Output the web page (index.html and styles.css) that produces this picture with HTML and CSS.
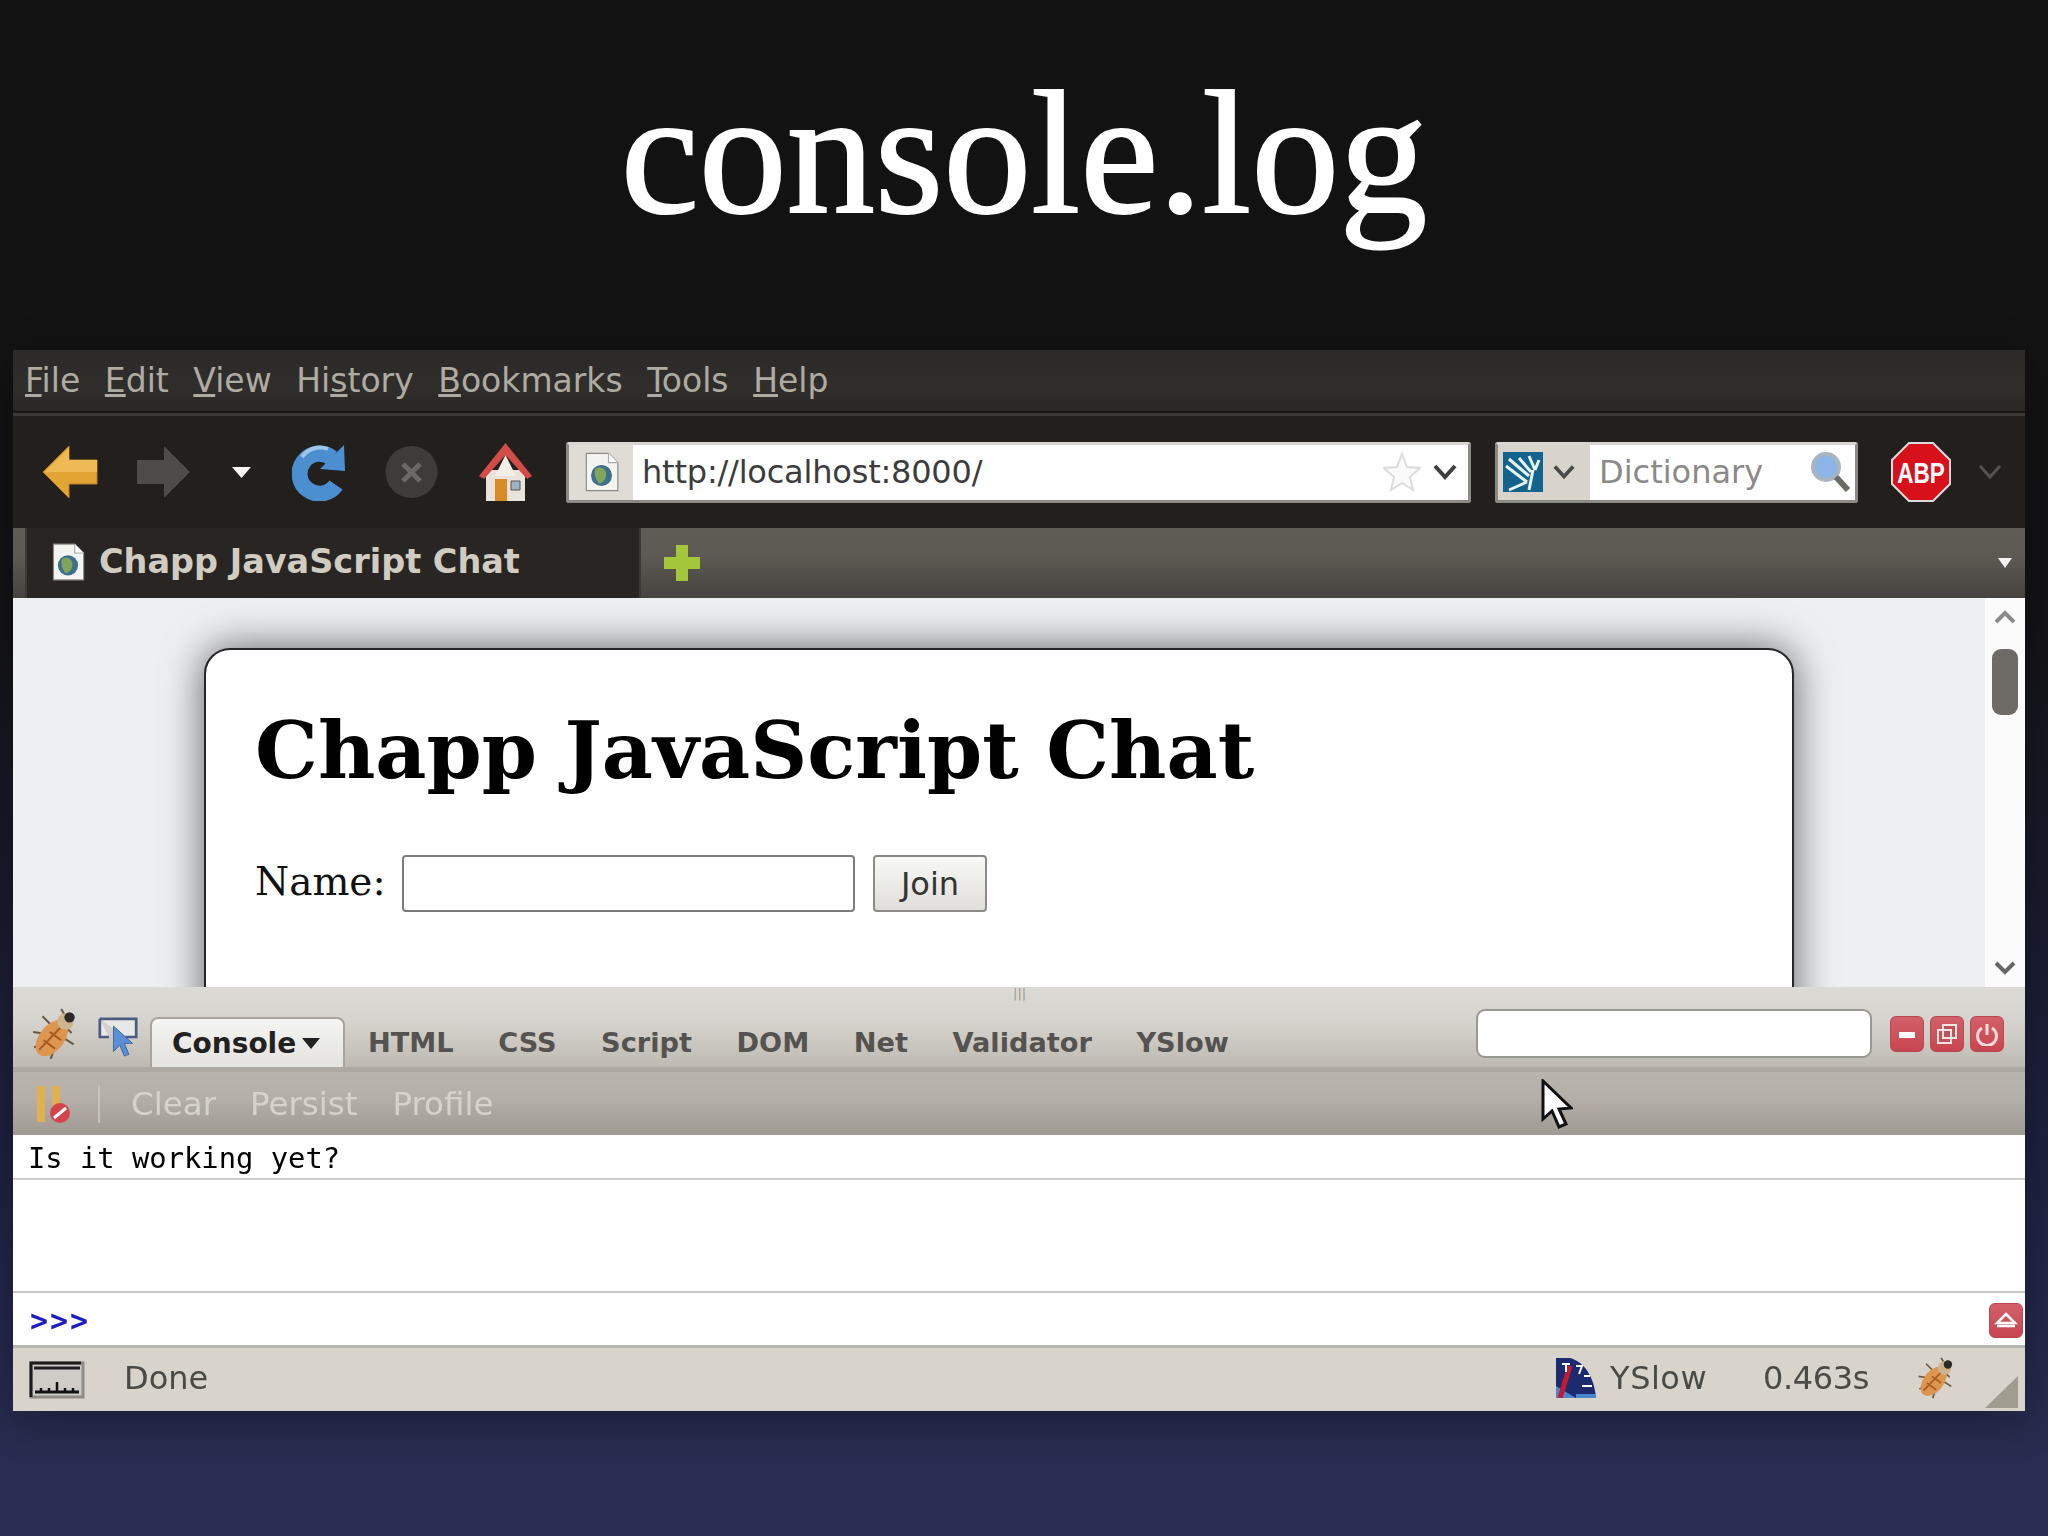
FILE: index.html
```html
<!DOCTYPE html>
<html lang="en">
<head>
    <meta charset="UTF-8">
    <title>console.log</title>
    <link rel="stylesheet" href="styles.css">
</head>
<body>
    <svg class="defs" width="0" height="0">
        <symbol id="bug" viewBox="0 0 50 50">
            <g stroke="#6b5a45" stroke-width="2" fill="none">
                <path d="M22 18 12 8M16 25 3 23M15 33 4 38M24 36 20 49M31 28 42 35M30 14 40 24M34 8 30 1"/>
            </g>
            <ellipse cx="21" cy="29" rx="12" ry="20" transform="rotate(38 21 29)" fill="#dc9650"/>
            <path d="M9 40 31 17M13 31 24 39M19 23 30 31" stroke="#a85a20" stroke-width="2" fill="none"/>
            <circle cx="34" cy="13" r="8" fill="#cdb48e"/>
            <circle cx="38" cy="9" r="5" fill="#2c2a28"/>
        </symbol>
        <symbol id="page" viewBox="0 0 30 34">
            <path d="M2 1h19l8 8v24H2z" fill="#f4f4f0" stroke="#8a8a86"/>
            <path d="M21 1v8h8" fill="#fff" stroke="#aaa"/>
            <circle cx="15" cy="20" r="9" fill="#3d6f8e"/>
            <path d="M10 14c4-2 9 0 9 5s-4 8-6 8c-3-3-5-9-3-13z" fill="#7fa65a"/>
        </symbol>
    </svg>

    <h1 class="slide-title">console.log</h1>

    <div class="window">
        <div class="menubar">
            <span><u>F</u>ile</span>
            <span><u>E</u>dit</span>
            <span><u>V</u>iew</span>
            <span>Hi<u>s</u>tory</span>
            <span><u>B</u>ookmarks</span>
            <span><u>T</u>ools</span>
            <span><u>H</u>elp</span>
        </div>

        <div class="navbar">
            <svg class="nav-back" width="56" height="54" viewBox="0 0 56 54"><path d="M27 1 1 27l26 26V39h28V15H27z" fill="#e2a534" stroke="#b88222"/><path d="M27 3 3 27h52V15H27z" fill="#eeba55"/></svg>
            <svg class="nav-forward" width="55" height="54" viewBox="0 0 55 54"><path d="M28 1l26 26-26 26V39H1V15h27z" fill="#4e4c49"/></svg>
            <svg class="nav-caret" width="19" height="12" viewBox="0 0 19 12"><path d="M0 1h19l-9.500 11z" fill="#f4f4f4"/></svg>
            <svg class="nav-reload" width="54" height="58" viewBox="0 0 54 58"><path d="M44 42a20 20 0 1 1-4-27" fill="none" stroke="#4c8fd0" stroke-width="16"/><path d="M28 26 53 28 52 2z" fill="#4c8fd0"/><path d="M10 14a22 22 0 0 1 26-8" fill="none" stroke="#9cc6ea" stroke-width="4"/></svg>
            <svg class="nav-stop" width="55" height="54" viewBox="0 0 55 54"><circle cx="27.500" cy="27" r="26" fill="#3e3c3a"/><path d="M19 19l17 17M36 19 19 36" stroke="#6c6864" stroke-width="5"/></svg>
            <svg class="nav-home" width="55" height="60" viewBox="0 0 55 60"><path d="M8 28h39v31H8z" fill="#e8e4dc"/><path d="M27.500 1 1 34l5 3L27.500 13 49 37l5-3z" fill="#d24c48"/><path d="M17 34 27.500 13 38 34z" fill="#f3efe6"/><path d="M17 37h12v22H17z" fill="#d98a24"/><path d="M33 39h9v9h-9z" fill="#9fb2c0" stroke="#555"/></svg>

            <div class="urlbar">
                <span class="url-site"><svg width="35" height="40"><use href="#page"/></svg></span>
                <span class="url-text">http://localhost:8000/</span>
                <svg class="url-star" width="38" height="40" viewBox="0 0 38 40"><path d="M19 2l5 13 13 1-10 9 3 13-11-7-11 7 3-13-10-9 13-1z" fill="#fafafa" stroke="#dcdcdc" stroke-width="2"/></svg>
                <svg class="chev" width="24" height="16" viewBox="0 0 24 16"><path d="M2 2l10 11L22 2" fill="none" stroke="#3e3e3e" stroke-width="4"/></svg>
            </div>

            <div class="searchbar">
                <span class="search-engine">
                    <svg width="40" height="40" viewBox="0 0 40 40"><path d="M0 0h40v40H0z" fill="#14638c"/><path d="M3 14 24 30M6 7 26 24M16 6l12 14M26 4l6 14M36 8 32 18M30 18 26 38M24 30 6 38" stroke="#e6f4f4" stroke-width="3" fill="none"/></svg>
                    <svg class="chev" width="22" height="16" viewBox="0 0 24 16"><path d="M2 2l10 11L22 2" fill="none" stroke="#4a4a4a" stroke-width="4"/></svg>
                </span>
                <span class="search-text">Dictionary</span>
                <svg class="search-lens" width="40" height="42" viewBox="0 0 40 42"><circle cx="16" cy="16" r="13" fill="#8db4e6" stroke="#a9b4c0" stroke-width="4"/><path d="M26 26l12 13" stroke="#6a6d64" stroke-width="6"/></svg>
            </div>

            <svg class="abp" width="60" height="60" viewBox="0 0 60 60"><path d="M18 1h24l17 17v24L42 59H18L1 42V18z" fill="#d8101c" stroke="#dcdcdc" stroke-width="2"/><text text-anchor="middle" class="abp-text" transform="translate(30 41) scale(0.75 1)">ABP</text></svg>
            <svg class="abp-chev" width="26" height="16" viewBox="0 0 24 16"><path d="M2 2l10 11L22 2" fill="none" stroke="#55524e" stroke-width="3"/></svg>
        </div>

        <div class="tabstrip">
            <div class="tab">
                <svg width="34" height="38"><use href="#page"/></svg>
                <span>Chapp JavaScript Chat</span>
            </div>
            <svg class="tab-new" width="38" height="38" viewBox="0 0 38 38"><path d="M13 1h12v12h12v12H25v12H13V25H1V13h12z" fill="#a4c639"/></svg>
            <svg class="tab-list" width="16" height="12" viewBox="0 0 16 12"><path d="M1 1h14l-7 10z" fill="#f4f4f4"/></svg>
        </div>

        <div class="viewport">
            <div class="page-area">
                <div class="card">
                    <h2>Chapp JavaScript Chat</h2>
                    <div class="join-form">
                        <label>Name:</label>
                        <span class="name-input"></span>
                        <span class="join-btn">Join</span>
                    </div>
                </div>
            </div>
            <div class="scrollbar">
                <svg width="24" height="14" viewBox="0 0 24 14"><path d="M3 12 12 3l9 9" fill="none" stroke="#8a8a88" stroke-width="4"/></svg>
                <div class="scroll-thumb"></div>
                <svg class="scroll-down" width="24" height="14" viewBox="0 0 24 14"><path d="M3 2l9 9 9-9" fill="none" stroke="#666" stroke-width="4"/></svg>
            </div>
        </div>

        <div class="fb-toolbar">
            <span class="fb-grip">|||</span>
            <svg class="fb-bug" width="56" height="52"><use href="#bug"/></svg>
            <svg class="fb-inspect" width="42" height="40" viewBox="0 0 44 44"><path d="M2 2h40v20H30M2 2v20h10" fill="#e8e8e6" stroke="#4c5c80" stroke-width="3"/><path d="M17 10v28l7-7 5 12 5-2-5-12h9z" fill="#5a8fd8" stroke="#3a5f9a"/></svg>
            <div class="fb-tab">Console<svg width="20" height="11" viewBox="0 0 20 11"><path d="M1 0h18l-9 11z" fill="#222"/></svg></div>
            <div class="fb-panels">
                <span>HTML</span>
                <span>CSS</span>
                <span>Script</span>
                <span>DOM</span>
                <span>Net</span>
                <span>Validator</span>
                <span>YSlow</span>
            </div>
            <div class="fb-search"></div>
            <div class="fb-buttons">
                <span class="red-btn"><svg width="20" height="20" viewBox="0 0 20 20"><path d="M2 8h16v6H2z" fill="#fff"/></svg></span>
                <span class="red-btn"><svg width="22" height="22" viewBox="0 0 22 22"><path d="M7 2h13v13H7zM2 7h13v13H2z" fill="#c0505a" stroke="#f5e6e0" stroke-width="2"/></svg></span>
                <span class="red-btn"><svg width="24" height="24" viewBox="0 0 24 24"><path d="M7 6a9.500 9.500 0 1 0 10 0M12 2v11" fill="none" stroke="#f3dcd8" stroke-width="3"/></svg></span>
            </div>
        </div>

        <div class="fb-subbar">
            <svg class="pause" width="38" height="40" viewBox="0 0 38 40"><path d="M2 2h8v36H2zM17 2h8v24h-8z" fill="#e2b050"/><circle cx="25" cy="29" r="10" fill="#d4444a"/><path d="M19 34 31 24" stroke="#fff" stroke-width="3"/></svg>
            <span class="fb-sep"></span>
            <span class="sub-clear">Clear</span>
            <span class="sub-persist">Persist</span>
            <span class="sub-profile">Profile</span>
        </div>

        <div class="log-row">Is it working yet?</div>
        <div class="log-empty"></div>
        <div class="cmd-line">
            <span class="prompt">&gt;&gt;&gt;</span>
            <span class="red-btn cmd-btn"><svg width="24" height="16" viewBox="0 0 24 16"><path d="M12 2 21 11H3zM3 14h18" fill="none" stroke="#fff" stroke-width="2.500"/></svg></span>
        </div>

        <div class="statusbar">
            <svg class="status-meter" width="56" height="38" viewBox="0 0 56 38"><path d="M2 2h52v34H2z" fill="#cfccc8" stroke="#8e8c86" stroke-width="3"/><path d="M2 36V2h50" fill="none" stroke="#1c1c1c" stroke-width="3"/><path d="M5 7h46" stroke="#1c1c1c" stroke-width="3"/><path d="M6 31h44" stroke="#111" stroke-width="3"/><path d="M12 31v-4M20 31v-4M28 31v-10M36 31v-4M44 31v-4" stroke="#111" stroke-width="2.500"/></svg>
            <span class="status-done">Done</span>
            <svg class="status-yslow" width="40" height="40" viewBox="0 0 40 40"><path d="M0 0h14c14 4 24 18 26 40H0z" fill="#1c2a70"/><path d="M20 36h20v4H20zM0 28l20 12H0z" fill="#4a86cc"/><path d="M14 8 4 40" stroke="#c8182c" stroke-width="5"/><path d="M6 6h8M10 6v8M20 8h6l-3 8M28 18h6M26 28h10" stroke="#fff" stroke-width="2" fill="none"/></svg>
            <span class="status-yslow-text">YSlow</span>
            <span class="status-time">0.463s</span>
            <svg class="status-bug" width="42" height="42"><use href="#bug"/></svg>
            <svg class="status-grip" width="33" height="32" viewBox="0 0 33 32"><path d="M33 0v32H0z" fill="#a09c90"/></svg>
        </div>

        <svg class="cursor" width="32" height="50" viewBox="0 0 32 50"><path d="M2 2v38l9-8 7 16 7-3-7-15 12-1z" fill="#fff" stroke="#111" stroke-width="3"/></svg>
    </div>
</body>
</html>
```

FILE: styles.css
```css
html, body {
    margin: 0;
    height: 1536px;
    overflow: hidden;
}
body {
    background: linear-gradient(#121212 0, #131315 600px, #1e2140 1150px, #292e52 1480px);
    font-family: "DejaVu Sans", sans-serif;
}
.defs {
    display: block;
    height: 0;
}
.slide-title {
    margin: 0;
    height: 350px;
    box-sizing: border-box;
    padding-top: 58px;
    text-align: center;
    font-family: "Liberation Serif", serif;
    font-weight: normal;
    font-size: 176px;
    line-height: 190px;
    color: #fff;
    -webkit-text-stroke: 2px #fff;
}
.window {
    position: relative;
    margin-left: 13px;
    width: 2012px;
    height: 1061px;
    display: flex;
    flex-direction: column;
    box-shadow: 0 10px 40px rgba(0, 0, 0, 0.3);
    filter: blur(0.7px);
}

/* browser chrome */
.menubar {
    height: 66px;
    box-sizing: border-box;
    display: flex;
    align-items: center;
    gap: 24.600px;
    padding: 0 0 2px 12px;
    background: linear-gradient(#2c2a28, #302e2b 60%, #292725);
    border-bottom: 3px solid #3b3936;
    box-shadow: inset 0 -2px 0 #1c1a18;
    font-size: 33px;
    color: #aeaba3;
}
.navbar {
    height: 112px;
    display: flex;
    align-items: center;
    background: #221f1d;
}
.navbar svg {
    flex: none;
}
.nav-back { margin-left: 29px; }
.nav-forward { margin-left: 38px; }
.nav-caret { margin-left: 41px; }
.nav-reload { margin-left: 41px; }
.nav-stop { margin-left: 38px; }
.nav-home { margin-left: 39px; }
.urlbar {
    margin-left: 33px;
    width: 905px;
    height: 61px;
    box-sizing: border-box;
    display: flex;
    align-items: center;
    background: #fff;
    border: 3px solid #8c8a86;
    border-top-color: #d8d6d2;
    border-radius: 3px;
    font-size: 32px;
    color: #3c3c3c;
}
.url-site {
    width: 64px;
    height: 100%;
    display: flex;
    align-items: center;
    justify-content: center;
    background: #dfdcd6;
    flex: none;
}
.url-text {
    margin-left: 9px;
    flex: 1;
    letter-spacing: -0.2px;
}
.url-star { margin-right: 12px; }
.chev { margin-right: 11px; }
.searchbar {
    margin-left: 24px;
    width: 363px;
    height: 61px;
    box-sizing: border-box;
    display: flex;
    align-items: center;
    background: #fff;
    border: 3px solid #8c8a86;
    border-top-color: #d8d6d2;
    border-radius: 3px;
    font-size: 32px;
    color: #8a8a88;
}
.search-engine {
    width: 92px;
    height: 100%;
    display: flex;
    align-items: center;
    gap: 10px;
    padding-left: 5px;
    box-sizing: border-box;
    background: #d8d4cc;
    flex: none;
}
.search-engine .chev { margin: 0; }
.search-text {
    margin-left: 9px;
    flex: 1;
}
.search-lens { margin-right: 5px; }
.abp { margin-left: 33px; }
.abp-text {
    font-family: "Liberation Sans", sans-serif;
    font-weight: bold;
    font-size: 30px;
    fill: #fff;
}
.abp-chev { margin-left: 26px; }
.tabstrip {
    height: 70px;
    display: flex;
    align-items: center;
    position: relative;
    background: linear-gradient(#5f5c56, #5d5a54 40%, #46423e);
}
.tab {
    margin-left: 12px;
    width: 616px;
    height: 100%;
    box-sizing: border-box;
    display: flex;
    align-items: center;
    gap: 14px;
    padding: 0 0 3px 24px;
    background: #282522;
    border-left: 2px solid #3c3a37;
    border-right: 2px solid #3c3a37;
    font-size: 33.500px;
    font-weight: bold;
    color: #d0ccc2;
}
.tab-new { margin-left: 22px; }
.tab-list { margin-left: auto; margin-right: 12px; }

/* page inside the browser */
.viewport {
    height: 389px;
    display: flex;
    overflow: hidden;
    background: #eeeff1;
}
.page-area {
    flex: 1;
    padding: 50px 0 0 191px;
}
.card {
    width: 1590px;
    height: 400px;
    box-sizing: border-box;
    padding: 56px 49px;
    background: #fff;
    border: 2px solid #26262a;
    border-radius: 26px;
    box-shadow: 0 0 42px rgba(0, 0, 0, 0.6);
}
.card h2 {
    margin: 0;
    font-family: "DejaVu Serif", serif;
    font-size: 79px;
    line-height: 90px;
    color: #000;
}
.join-form {
    margin-top: 59px;
    display: flex;
    align-items: center;
}
.join-form label {
    width: 147px;
    font-family: "DejaVu Serif", serif;
    font-size: 39px;
    color: #111;
    margin-top: -4px;
}
.name-input {
    width: 453px;
    height: 57px;
    box-sizing: border-box;
    background: #fff;
    border: 2px solid #7c7c7a;
    border-radius: 4px;
}
.join-btn {
    margin-left: 18px;
    width: 114px;
    height: 57px;
    box-sizing: border-box;
    display: flex;
    align-items: center;
    justify-content: center;
    background: linear-gradient(#f8f8f6, #dfdeda);
    border: 2px solid #8a8a86;
    border-radius: 4px;
    font-size: 32px;
    color: #333;
}
.scrollbar {
    width: 40px;
    flex: none;
    display: flex;
    flex-direction: column;
    align-items: center;
    background: #fbfbfb;
    padding-top: 12px;
    box-sizing: border-box;
}
.scroll-thumb {
    margin-top: 25px;
    width: 26px;
    height: 66px;
    background: #6e6a66;
    border-radius: 9px;
}
.scroll-down { margin-top: 246px; }

/* firebug */
.fb-toolbar {
    height: 85px;
    box-sizing: border-box;
    display: flex;
    align-items: center;
    position: relative;
    background: linear-gradient(#dcdad4, #d5d3cd 45%, #bebab3);
    border-bottom: 5px solid #aeaaa3;
}
.fb-grip {
    position: absolute;
    left: 1000px;
    top: -1px;
    font-size: 13px;
    color: #9c9a94;
}
.fb-bug { margin: 14px 0 0 15px; flex: none; }
.fb-inspect { margin: 20px 0 0 13px; flex: none; }
.fb-tab {
    margin-left: 11px;
    align-self: flex-end;
    width: 195px;
    height: 50px;
    box-sizing: border-box;
    display: flex;
    align-items: center;
    gap: 5px;
    padding-left: 20px;
    background: linear-gradient(#f4f4f2, #e4e3df);
    border: 2px solid #a8a49c;
    border-bottom: none;
    border-radius: 8px 8px 0 0;
    font-size: 28px;
    font-weight: bold;
    color: #222;
}
.fb-panels {
    margin-left: 23px;
    display: flex;
    gap: 44.500px;
    font-size: 27.200px;
    font-weight: bold;
    color: #55534f;
    padding-top: 30px;
    width: 1108px;
}
.fb-search {
    width: 396px;
    height: 49px;
    box-sizing: border-box;
    flex: none;
    margin-top: 12px;
    background: #fff;
    border: 2px solid #9a9892;
    border-radius: 9px;
}
.fb-buttons {
    margin-left: 18px;
    display: flex;
    gap: 6px;
    margin-top: 14px;
}
.red-btn {
    width: 34px;
    height: 36px;
    display: flex;
    align-items: center;
    justify-content: center;
    background: linear-gradient(#d2606a, #c8454f);
    border-radius: 6px;
    border: 1px solid #b8474e;
    box-sizing: border-box;
}
.fb-subbar {
    height: 63px;
    display: flex;
    align-items: center;
    background: linear-gradient(#b9b5ae, #b4b0a9 40%, #9f9b94);
    font-size: 32.500px;
    color: #d6d3cc;
}
.pause { margin-left: 22px; flex: none; }
.fb-sep {
    margin-left: 25px;
    width: 2px;
    height: 38px;
    background: #c6c3bc;
}
.sub-clear { margin-left: 31px; }
.sub-persist { margin-left: 34px; }
.sub-profile { margin-left: 35px; }
.log-row {
    height: 45px;
    box-sizing: border-box;
    padding: 2px 0 0 15px;
    display: flex;
    align-items: center;
    background: #fff;
    border-bottom: 2px solid #cfcfcf;
    font-family: "DejaVu Sans Mono", monospace;
    font-size: 28.800px;
    color: #000;
}
.log-empty {
    height: 113px;
    background: #fff;
    border-bottom: 2px solid #c8c8c8;
    box-sizing: border-box;
}
.cmd-line {
    height: 55px;
    box-sizing: border-box;
    display: flex;
    align-items: center;
    justify-content: space-between;
    padding: 2px 2px 0 17px;
    background: #fff;
    border-bottom: 3px solid #b8b6b0;
}
.prompt {
    font-family: "DejaVu Sans Mono", monospace;
    font-weight: bold;
    font-size: 30px;
    letter-spacing: 2px;
    color: #1c1cc4;
}
.cmd-btn { height: 35px; }
.statusbar {
    height: 63px;
    box-sizing: border-box;
    padding-bottom: 3px;
    display: flex;
    align-items: center;
    background: #d8d3cb;
    font-size: 32px;
    color: #4a4a46;
}
.status-meter { margin: 3px 0 0 16px; flex: none; }
.status-done { margin-left: 39px; flex: 1; }
.status-yslow { flex: none; }
.status-yslow-text { margin-left: 14px; letter-spacing: 0.5px; }
.status-time { margin-left: 56px; letter-spacing: -0.4px; }
.status-bug { margin-left: 47px; flex: none; }
.status-grip { margin: 27px 7px 0 27px; flex: none; }
.cursor {
    position: absolute;
    left: 1528px;
    top: 729px;
}
```
